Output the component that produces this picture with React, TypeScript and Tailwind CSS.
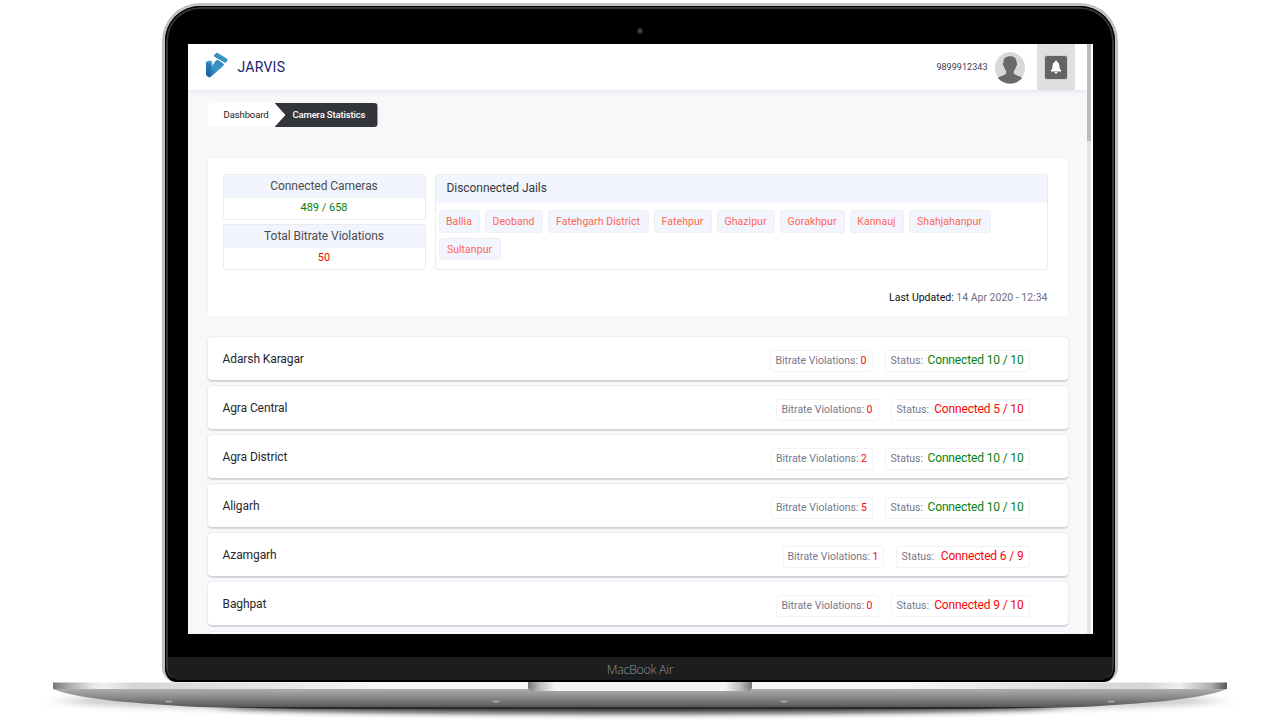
import React from 'react';

interface Jail {
  name: string;
  violations: number;
  connected: number;
  total: number;
  violationsWidth: string;
  statusWidth: string;
}

const jails: Jail[] = [
  { name: 'Adarsh Karagar', violations: 0, connected: 10, total: 10, violationsWidth: 'w-[103px]', statusWidth: 'w-[145px]' },
  { name: 'Agra Central', violations: 0, connected: 5, total: 10, violationsWidth: 'w-[103px]', statusWidth: 'w-[139px]' },
  { name: 'Agra District', violations: 2, connected: 10, total: 10, violationsWidth: 'w-[102px]', statusWidth: 'w-[145px]' },
  { name: 'Aligarh', violations: 5, connected: 10, total: 10, violationsWidth: 'w-[102px]', statusWidth: 'w-[145px]' },
  { name: 'Azamgarh', violations: 1, connected: 6, total: 9, violationsWidth: 'w-[101px]', statusWidth: 'w-[134px]' },
  { name: 'Baghpat', violations: 0, connected: 9, total: 10, violationsWidth: 'w-[103px]', statusWidth: 'w-[139px]' },
];

const disconnected = [
  { name: 'Ballia', width: 'w-[41px]' },
  { name: 'Deoband', width: 'w-[58px]' },
  { name: 'Fatehgarh District', width: 'w-[101px]' },
  { name: 'Fatehpur', width: 'w-[58px]' },
  { name: 'Ghazipur', width: 'w-[58px]' },
  { name: 'Gorakhpur', width: 'w-[65px]' },
  { name: 'Kannauj', width: 'w-[54px]' },
  { name: 'Shahjahanpur', width: 'w-[82px]' },
  { name: 'Sultanpur', width: 'w-[62px]' },
];

const Logo = () => (
  <svg width="24" height="27" viewBox="0 0 24 27">
    <defs>
      <linearGradient id="logo" x1="0" y1="1" x2="1" y2="0">
        <stop offset="0" stopColor="#17589b" />
        <stop offset="0.5" stopColor="#3b97c7" />
        <stop offset="1" stopColor="#2c86b8" />
      </linearGradient>
    </defs>
    <path d="M10.500 4 13 2 23 8.300v1.500l-1.700 1.700L10.500 5.200Z" fill="url(#logo)" stroke="url(#logo)" strokeWidth="1" strokeLinejoin="round" />
    <path d="M2.500 11.200 5 10 7.700 10.700v5.500l4.300-6.200 1.800-.8 5.700 4-1 2L7 25 5 26l-2.500-2Z" fill="url(#logo)" stroke="url(#logo)" strokeWidth="1" strokeLinejoin="round" />
    <path d="M2 11.500 7 13v11.500L5 26.200 2 24Z" fill="#1c5d9f" opacity=".4" />
  </svg>
);

const Avatar = () => (
  <svg width="30" height="32" viewBox="0 0 30 32">
    <ellipse cx="15" cy="16" rx="15" ry="16" fill="#d8d8d8" />
    <path d="M15 4.200c-4.900 0-6.700 2.600-6.500 6.400-.9.2-.6 3.500.5 3.900.4 2 1.200 3.400 2.200 4.400v2.700c-1.400 2-6.300 2.200-8.200 4.700C6 29.400 10.200 31.600 15 31.600s9-2.200 12-5.300c-1.900-2.500-6.800-2.700-8.200-4.700v-2.700c1-1 1.800-2.400 2.200-4.400 1.100-.4 1.400-3.700.5-3.900.2-3.800-1.600-6.400-6.500-6.400Z" fill="#67696b" />
  </svg>
);

const Bell = () => (
  <svg width="12" height="14" viewBox="0 0 12 14" fill="#fff">
    <path d="M6 .5a1 1 0 0 0-1 1v.4C3.300 2.300 2.600 3.700 2.600 5.500c0 3-.9 4.200-1.800 5.100v.8h10.400v-.8c-.9-.9-1.800-2.100-1.800-5.100C9.400 3.700 8.700 2.300 7 1.900v-.4a1 1 0 0 0-1-1ZM4.500 12a1.500 1.500 0 0 0 3 0Z" />
  </svg>
);

const Header = () => (
  <header className="flex h-[46px] w-[899px] shrink-0 items-center bg-white pl-4 pr-3 shadow-[0_1px_5px_rgba(60,70,110,0.13)]">
    <div className="-mt-1.5 mr-2.5">
      <Logo />
    </div>
    <span className="text-[14px] tracking-[0.25px] text-[#18266f]">JARVIS</span>
    <div className="ml-auto flex h-full items-center">
      <span className="mr-[7px] mt-0.5 text-[9px] tracking-[0.05px] text-[#3b3b54]">9899912343</span>
      <div className="mt-0.5">
        <Avatar />
      </div>
      <div className="ml-3 flex h-full w-[38px] items-center justify-center bg-[#dfdfdf]">
        <div className="flex h-[25px] w-6 items-center justify-center rounded-[3px] border border-[#d0d0d0] bg-[#646464]">
          <Bell />
        </div>
      </div>
    </div>
  </header>
);

const Breadcrumb = () => (
  <nav className="ml-px flex h-6 w-[170px] shrink-0 overflow-hidden rounded bg-white text-[9.500px] leading-[23px]">
    <span className="w-[67px] whitespace-nowrap pl-4 tracking-[-0.1px] text-[#222]">Dashboard</span>
    <span className="flex-1 whitespace-nowrap bg-[#32363b] pl-[18px] font-medium tracking-[-0.15px] text-white [clip-path:polygon(0_0,100%_0,100%_100%,0_100%,11px_50%)]">
      Camera Statistics
    </span>
  </nav>
);

const StatBox = ({ title, value, color }: { title: string; value: string; color: string }) => (
  <div className="h-[46px] overflow-hidden rounded-[3px] border border-[#ececf0] text-center">
    <div className="h-[23px] bg-[#f2f5fd] text-[12px] leading-[22px] tracking-[-0.05px] text-[#4c4c4f]">{title}</div>
    <div className={`text-[11px] leading-[20px] ${color}`}>{value}</div>
  </div>
);

const Summary = () => (
  <section className="mt-[30px] h-[160px] shrink-0 rounded-[3px] border border-[#f3f3f6] bg-white pl-[15px] pr-5 pt-[15.500px]">
    <div className="flex gap-[9px]">
      <div className="flex w-[203px] flex-col gap-1">
        <StatBox title="Connected Cameras" value="489 / 658" color="text-[#087f0c]" />
        <StatBox title="Total Bitrate Violations" value="50" color="text-[#f90606]" />
      </div>
      <div className="h-[96px] flex-1 overflow-hidden rounded-[3px] border border-[#ececf0]">
        <div className="h-[28px] bg-[#f2f5fd] pl-[11px] text-[12px] leading-[27px] tracking-[-0.05px] text-[#38383b]">Disconnected Jails</div>
        <div className="flex flex-wrap gap-[5px] pl-[3px] pt-[7.500px]">
          {disconnected.map((jail) => (
            <span
              key={jail.name}
              className={`h-[22.500px] whitespace-nowrap rounded-[3px] border border-[#eff0f6] bg-[#f2f5fd] text-center text-[10.500px] leading-[21px] tracking-[0.05px] text-[#fc6753] ${jail.width}`}
            >
              {jail.name}
            </span>
          ))}
        </div>
      </div>
    </div>
    <p className="mt-5 text-right text-[10.500px] leading-4 text-[#6d6d83]">
      <span className="text-[#111]">Last Updated:</span> 14 Apr 2020 - 12:34
    </p>
  </section>
);

const JailRow = ({ jail }: { jail: Jail }) => (
  <div className="flex h-[45px] shrink-0 items-center rounded-[5px] border border-[#ededf1] border-b-[#d0d1d6] bg-white pl-[15px] pr-[38px] shadow-[0_1px_1px_rgba(90,92,105,0.2)]">
    <span className="text-[12px] tracking-[-0.1px] text-[#28282c]">{jail.name}</span>
    <div className="ml-auto mt-1 flex gap-3 whitespace-nowrap text-[10.500px] leading-5 text-[#77778c]">
      <div className={`h-[22px] rounded-[3px] border border-[#f3f3f7] text-center ${jail.violationsWidth}`}>
        Bitrate Violations: <span className="text-[#f90606]">{jail.violations}</span>
      </div>
      <div className={`flex h-[22px] justify-between rounded-[3px] border border-[#f3f3f7] px-[5px] ${jail.statusWidth}`}>
        <span>Status:</span>
        <span
          className={`text-[12px] leading-[19px] tracking-[-0.15px] ${
            jail.connected === jail.total ? 'text-[#087f0c]' : 'text-[#f90606]'
          }`}
        >
          Connected {jail.connected} / {jail.total}
        </span>
      </div>
    </div>
  </div>
);

// Keyboard half of the laptop, seen edge-on
const LaptopBase = () => (
  <svg className="block shrink-0" width="1280" height="38" viewBox="0 682 1280 38">
    <defs>
      <linearGradient id="edge">
        <stop offset="0" stopColor="#777" />
        <stop offset="0.013" stopColor="#aaa" />
        <stop offset="0.035" stopColor="#e9e9e9" />
        <stop offset="0.045" stopColor="#efefef" />
        <stop offset="0.07" stopColor="#d6d6d6" />
        <stop offset="0.2" stopColor="#e6e7e8" />
        <stop offset="0.28" stopColor="#f6f7f8" />
        <stop offset="0.72" stopColor="#f6f7f8" />
        <stop offset="0.8" stopColor="#e6e7e8" />
        <stop offset="0.93" stopColor="#d6d6d6" />
        <stop offset="0.96" stopColor="#efefef" />
        <stop offset="0.987" stopColor="#aaa" />
        <stop offset="1" stopColor="#555" />
      </linearGradient>
      <linearGradient id="belly" x1="0" y1="0" x2="0" y2="1">
        <stop offset="0" stopColor="#abadaf" />
        <stop offset="0.5" stopColor="#858789" />
        <stop offset="1" stopColor="#555759" />
      </linearGradient>
      <linearGradient id="notch">
        <stop offset="0" stopColor="#777" />
        <stop offset="0.05" stopColor="#bbb" />
        <stop offset="0.12" stopColor="#f3f4f5" />
        <stop offset="0.88" stopColor="#f3f4f5" />
        <stop offset="0.95" stopColor="#bbb" />
        <stop offset="1" stopColor="#777" />
      </linearGradient>
      <filter id="blur" x="-10%" y="-100%" width="120%" height="300%">
        <feGaussianBlur stdDeviation="12 3" />
      </filter>
    </defs>
    <ellipse cx="640" cy="701" rx="580" ry="11" fill="#999" opacity=".55" filter="url(#blur)" />
    <ellipse cx="640" cy="706" rx="420" ry="7" fill="#111" opacity=".85" filter="url(#blur)" />
    <path d="M53 689H1227C1205 699 1140 704 1080 707H200C140 704 75 699 53 689Z" fill="url(#belly)" />
    <path d="M200 707H1080L970 709H310Z" fill="#2b2b2c" />
    <path d="M53 682.500H1227V689H53Z" fill="url(#edge)" />
    <path d="M528 682H752V688Q751 691 746 691H534Q529 691 528 688Z" fill="url(#notch)" />
    {[169, 496, 784, 1111].map((x) => (
      <ellipse key={x} cx={x} cy="701.500" rx="3.500" ry="1" fill="#a8a9aa" />
    ))}
  </svg>
);

const App: React.FC = () => {
  return (
    <div className="flex h-[720px] w-[1280px] flex-col items-center overflow-hidden bg-white pt-[3px] font-[Roboto,sans-serif]">
      <div className="h-[679px] w-[956px] shrink-0 rounded-b-[14px] rounded-t-[38px] border-[3px] border-b-0 border-[#bfc0c2] bg-black">
        <div className="flex h-full flex-col overflow-hidden rounded-b-[14px] rounded-t-[35px] border border-black">
          <div className="flex min-h-0 flex-1 flex-col items-center overflow-hidden rounded-b-[14px] rounded-t-[34px] border-2 border-b border-[#343536] border-b-black bg-black">
            <div className="flex h-[35px] shrink-0 items-center pt-2">
              <div className="h-1.5 w-1.5 rounded-full border border-[#252525] bg-[#454545]" />
            </div>
            <div className="flex h-[590px] w-[905px] shrink-0 overflow-hidden bg-[#f8f8fb]">
              <div className="flex w-[899px] flex-col">
                <Header />
                <main className="flex min-h-0 flex-1 flex-col overflow-hidden pl-[19px] pr-[18px] pt-[13px]">
                  <Breadcrumb />
                  <Summary />
                  <div className="mt-[19px] flex flex-col gap-[4.100px]">
                    {jails.map((jail) => (
                      <JailRow key={jail.name} jail={jail} />
                    ))}
                    <div className="h-[45px] shrink-0 rounded-[5px] border border-[#ededf1] bg-white" />
                  </div>
                </main>
              </div>
              <div className="w-1 bg-[#e3e4e4]">
                <div className="h-[97px] bg-[#bcbcbc]" />
              </div>
              <div className="w-0.5 bg-white" />
            </div>
            <div className="mt-[23px] flex h-[25px] w-full shrink-0 items-center justify-center bg-[#1c1d1f]">
              <span className="mt-px font-['Open_Sans'] text-[12.500px] font-light tracking-[-0.35px] text-[#939395]">MacBook Air</span>
            </div>
          </div>
        </div>
      </div>
      <LaptopBase />
    </div>
  );
};

export default App;
